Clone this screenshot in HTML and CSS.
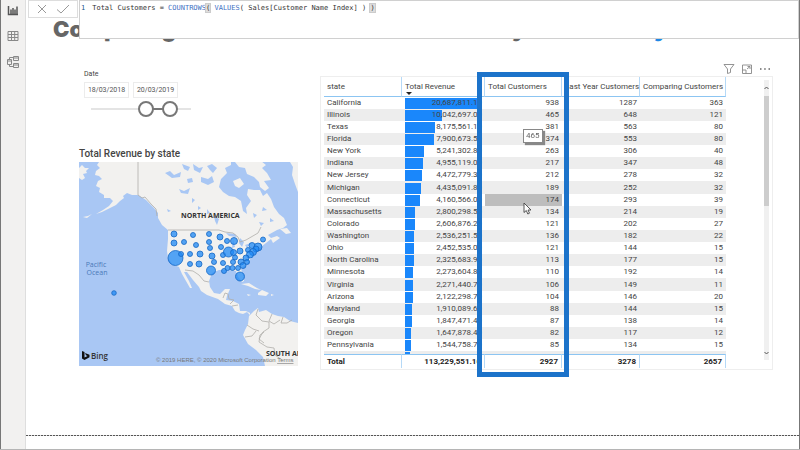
FILE: index.html
```html
<!DOCTYPE html>
<html lang="en">
<head>
<meta charset="utf-8">
<meta name="viewport" content="width=device-width, initial-scale=1">
<title>Comparing Customers</title>
<link rel="stylesheet" href="styles.css">
</head>
<body>
<nav class="rail" aria-label="Views">
  <button class="rail-btn" aria-label="Report view">
    <svg width="12" height="12" viewBox="0 0 12 12"><path d="M1.500 2v8.500H11M4 10V5.500M6 10V4M8 10V5.500M10 10V2.500" fill="none" stroke="#555" stroke-width="1.500"/></svg>
  </button>
  <button class="rail-btn" aria-label="Data view">
    <svg width="12" height="12" viewBox="0 0 12 12"><path d="M1 1.500h10v9H1zM1 4.500h10M1 7.500h10M4.500 1.500v9M7.700 1.500v9" fill="none" stroke="#888" stroke-width="1"/></svg>
  </button>
  <button class="rail-btn" aria-label="Model view">
    <svg width="14" height="14" viewBox="0 0 14 14"><path d="M1.500 4.500h4v5h-4zM1.500 6h4M7.500 1.500h5v4h-5zM7.500 3h5M7.500 8.500h5v4h-5zM7.500 10h5M3.500 4.500v-2h4M3.500 9.500v2h4" fill="none" stroke="#888" stroke-width="1"/></svg>
  </button>
</nav>

<main class="report">
  <h1 class="title"><span>Comparing</span> <span class="title-mid">by</span> <span class="title-end">y</span></h1>

  <div class="formula">
    <div class="formula-actions">
      <button aria-label="Cancel"><svg width="10" height="10" viewBox="0 0 10 10"><path d="M1 1l8 8M9 1L1 9" fill="none" stroke="#999" stroke-width="1"/></svg></button>
      <button aria-label="Commit"><svg width="14" height="10" viewBox="0 0 14 10"><path d="M1 5.500L5 9l8-8" fill="none" stroke="#999" stroke-width="1"/></svg></button>
    </div>
    <div class="formula-editor"><span class="line-no">1</span><code>Total Customers = <span class="fn">COUNTROWS</span><span class="paren">(</span> <span class="fn">VALUES</span>( Sales[Customer Name Index] ) <span class="paren">)</span></code></div>
  </div>

  <div class="canvas">
    <div class="side">
      <section class="slicer">
        <h2 class="slicer-title">Date</h2>
        <div class="dates">
          <input type="text" aria-label="Start date" value="18/03/2018">
          <input type="text" aria-label="End date" value="20/03/2019">
        </div>
        <div class="range">
          <input type="range" aria-label="Range start" min="0" max="100" value="56">
          <input type="range" aria-label="Range end" min="0" max="100" value="85">
        </div>
      </section>
      <section class="map-visual">
        <h2 class="map-title">Total Revenue by state</h2>
        <svg class="map" viewBox="79 162 219 204" role="img" aria-label="Map of total revenue by state">
          <rect x="79" y="162" width="219" height="204" fill="#a9c7f4"/>
          <g fill="#f2f1ef">
            <path d="M99 162L97 165 100 168 96 171 95 175 99 176 102 179 98 181 96 186 100 188 99 192 104 195 104 198 110 198 113 201 109 206 103 210 96 214 102 212 110 208 116 205 120 201 124 198 123 196 127 193 132 195 138 195 143 198 146 200 150 204 154 208 158 213 158 218 162 225 168 230 168 239 167 251 168 258 172 264 179 267 182 274 186 281 190 288 192 288 189 281 184 272 187 272 193 280 199 287 201 291 207 295 218 299 225 304 232 306 235 311 239 313 243 314 247 312 250 315 250 313 246 311 240 311 239 304 233 301 226 300 227 296 230 289 225 289 220 294 214 293 210 287 209 281 212 273 219 270 228 270 236 271 238 277 242 282 244 281 243 275 241 269 248 262 251 258 254 251 262 246 266 243 271 239 273 243 280 238 277 236 271 238 268 235 277 230 283 228 287 225 284 218 279 214 274 207 271 199 267 193 263 196 260 190 254 190 248 189 247 195 251 201 246 208 247 214 243 211 241 201 235 197 229 196 223 192 219 187 221 179 227 173 225 168 231 165 231 162Z"/>
            <path d="M79 168l3-3 3 3 4 0-3 3 1 2-4 1 2 4-3 2-3-2zM83 217l5-1 4-2-5 4zM235 162l4 5 6 1 2 6 7 3 5 5 1 5 5 4 4-3-5-7 7-1-4-7-5-5 4-3-5-4zM233 181l7-3 4 6-5 4-4-2zM290 162l3 5-1 8 3 9 3 8V162z"/>
            <path d="M280 229l7-1 4 5-5 1zM241 284l8-1 8 5 4 2-6-1-7-3zM258 293l4-3 7 3-3 3-8-1zM247 294l4 1-3 1zM271 294l3 1-3 1z"/>
            <path d="M249 316L254 311 258 308 259 312 266 310 272 314 278 316 284 317 290 321 298 323V366H265L263 357 256 350 248 344 243 335 245 330 248 324z"/>
          </g>
          <g fill="#a9c7f4">
            <path d="M165 173l5-2 4 4 7-3-1 5-8 1zM179 189l5 2 6-3-2 6-7-1zM182 164l8 3-2 4-4-2zM193 164l6 4 4-1-3 6-6-3zM201 177l7 2 4-3 2 6-6 3-7-3zM187 179l5-1 1 4-5 1zM207 166l5-2 5 4-4 5-3-3zM167 209l4 2-3 1zM192 198l3 2-3 3zM214 216l5 3-2 6-2-4zM207 209l3 4-3 1zM198 206l3 2-3 2zM226 233l9 1 2 3-8-1zM233 239l2 8-3 1zM240 238l4 4-2 5-3-4zM245 245l6-2-4 5zM253 213l4 2-3 3zM263 207l4 3-5 1zM259 222l5 1-3 3zM270 218l4 3-4 1z"/>
          </g>
          <g fill="none" stroke="#b0aeab" stroke-width="0.800">
            <path d="M138 162v33l4 3 3-1 6 7 5 5 1 7M168 230h51l6 2 8 1 5 4 2 5 6-2 12-7 3-6"/>
            <path d="M185 270l8 1 6 4 5 6 5 1M223 298l2-5 3 1 1 5 5 1-4 4M232 306l6-1M258 309l-2 6 6 6 7 1v6l-6 4-4 7 5 4M247 325l6 4 6 2M272 314l-3 7 5 3 6-4M283 317l-2 6h6l5-3M264 332l-4 3-1 7 8 5 7 1 1 7 7 5M245 337l7-1 4-5"/>
          </g>
          <g class="bubbles">
            <circle cx="174" cy="234" r="3"/><circle cx="174" cy="243" r="3"/><circle cx="184" cy="242" r="2.500"/><circle cx="193" cy="235" r="2.500"/><circle cx="209" cy="234" r="2.500"/><circle cx="220" cy="237" r="3"/><circle cx="227" cy="241" r="2.500"/><circle cx="234" cy="241" r="3.500"/><circle cx="196" cy="245" r="2.500"/><circle cx="209" cy="242" r="2.500"/><circle cx="210" cy="248" r="2.500"/><circle cx="221" cy="247" r="2.500"/>
            <circle cx="175.500" cy="258" r="7.500"/><circle cx="181" cy="254" r="2.500"/><circle cx="190" cy="254" r="2.500"/><circle cx="200" cy="254" r="3"/><circle cx="212" cy="256" r="3"/><circle cx="223" cy="255" r="2.500"/><circle cx="228.500" cy="252" r="5"/><circle cx="233.500" cy="252.500" r="3"/><circle cx="240" cy="251" r="3"/><circle cx="248" cy="250" r="2.500"/><circle cx="252" cy="245.500" r="3"/><circle cx="263" cy="239.500" r="2.500"/><circle cx="258" cy="247" r="4"/><circle cx="256" cy="249" r="3"/><circle cx="253" cy="252" r="3.500"/><circle cx="250" cy="254.500" r="3.500"/><circle cx="246" cy="258" r="3"/><circle cx="235" cy="257.500" r="2.500"/><circle cx="233" cy="262" r="2.500"/><circle cx="241" cy="262" r="3"/>
            <circle cx="190" cy="264" r="2.500"/><circle cx="199" cy="264" r="3"/><circle cx="214" cy="262" r="2.500"/><circle cx="223" cy="263" r="2.500"/><circle cx="211" cy="270.500" r="4.500"/><circle cx="224" cy="271" r="2.500"/><circle cx="227.500" cy="268" r="2.500"/><circle cx="232.500" cy="268" r="2.500"/><circle cx="238" cy="268" r="2.500"/><circle cx="243" cy="265.500" r="3"/><circle cx="247" cy="262" r="2.500"/><circle cx="240" cy="276.500" r="4.500"/><circle cx="114" cy="293" r="2.300"/>
          </g>
          <g class="map-region"><text x="181" y="218">NORTH AMERICA</text><text x="266" y="356">SOUTH AMERICA</text></g>
          <g class="map-ocean"><text x="96" y="267" text-anchor="middle">Pacific</text><text x="97" y="275" text-anchor="middle">Ocean</text></g>
          <path d="M82 351l2.500 1v5.500l3-1.500-1.500-.8-1-2.200 4.500 1.700v2.500L84.500 360 82 358.500z" fill="#111"/>
          <text class="map-brand" x="91" y="359">Bing</text>
          <text class="map-credit" x="156" y="362">© 2019 HERE, © 2020 Microsoft Corporation <tspan text-decoration="underline">Terms</tspan></text>
        </svg>
      </section>
    </div>

    <section class="matrix">
      <div class="visual-tools">
        <button aria-label="Filters"><svg width="12" height="10" viewBox="0 0 12 10"><path d="M1 .5h10L7.500 5v3.500l-3 1V5z" fill="none" stroke="#888" stroke-width=".9"/></svg></button>
        <button aria-label="Focus mode"><svg width="10" height="10" viewBox="0 0 10 10"><path d="M.5 1h9v8.500h-9zM.5 6H4v3.500M5 5l3-2.500M5.500 2.500H8V5" fill="none" stroke="#888" stroke-width=".9"/></svg></button>
        <button aria-label="More options"><svg width="12" height="10" viewBox="0 0 12 10"><path d="M1 5h1.500M5.200 5h1.500M9.500 5H11" stroke="#666" stroke-width="1.400"/></svg></button>
      </div>
      <div class="frame">
        <div class="scroller">
          <table>
            <colgroup><col class="c-state"><col class="c-rev"><col class="c-total"><col class="c-last"><col class="c-comp"></colgroup>
            <thead><tr><th>state</th><th class="sorted">Total Revenue</th><th>Total Customers</th><th class="num">Last Year Customers</th><th class="num">Comparing Customers</th></tr></thead>
            <tbody>
              <tr><td>California</td><td><div class="bar"><i style="width:100%"></i><span>20,687,811.10</span></div></td><td>938</td><td>1287</td><td>363</td></tr>
              <tr><td>Illinois</td><td><div class="bar"><i style="width:48.5%"></i><span>10,042,697.00</span></div></td><td>465</td><td>648</td><td>121</td></tr>
              <tr><td>Texas</td><td><div class="bar"><i style="width:39.5%"></i><span>8,175,561.10</span></div></td><td>381</td><td>563</td><td>80</td></tr>
              <tr><td>Florida</td><td><div class="bar"><i style="width:38.2%"></i><span>7,900,673.50</span></div></td><td>374</td><td>553</td><td>80</td></tr>
              <tr><td>New York</td><td><div class="bar"><i style="width:25.3%"></i><span>5,241,302.80</span></div></td><td>263</td><td>306</td><td>40</td></tr>
              <tr><td>Indiana</td><td><div class="bar"><i style="width:24%"></i><span>4,955,119.00</span></div></td><td>217</td><td>347</td><td>48</td></tr>
              <tr><td>New Jersey</td><td><div class="bar"><i style="width:21.6%"></i><span>4,472,779.30</span></div></td><td>212</td><td>278</td><td>32</td></tr>
              <tr><td>Michigan</td><td><div class="bar"><i style="width:21.4%"></i><span>4,435,091.80</span></div></td><td>189</td><td>252</td><td>32</td></tr>
              <tr><td>Connecticut</td><td><div class="bar"><i style="width:20.1%"></i><span>4,160,566.00</span></div></td><td class="hovered">174</td><td>293</td><td>39</td></tr>
              <tr><td>Massachusetts</td><td><div class="bar"><i style="width:13.5%"></i><span>2,800,298.50</span></div></td><td>134</td><td>214</td><td>19</td></tr>
              <tr><td>Colorado</td><td><div class="bar"><i style="width:12.6%"></i><span>2,606,876.20</span></div></td><td>121</td><td>202</td><td>27</td></tr>
              <tr><td>Washington</td><td><div class="bar"><i style="width:12.3%"></i><span>2,536,251.50</span></div></td><td>136</td><td>182</td><td>22</td></tr>
              <tr><td>Ohio</td><td><div class="bar"><i style="width:11.9%"></i><span>2,452,535.00</span></div></td><td>121</td><td>144</td><td>15</td></tr>
              <tr><td>North Carolina</td><td><div class="bar"><i style="width:11.2%"></i><span>2,325,683.90</span></div></td><td>113</td><td>177</td><td>15</td></tr>
              <tr><td>Minnesota</td><td><div class="bar"><i style="width:11%"></i><span>2,273,604.80</span></div></td><td>110</td><td>192</td><td>14</td></tr>
              <tr><td>Virginia</td><td><div class="bar"><i style="width:11%"></i><span>2,271,440.70</span></div></td><td>106</td><td>149</td><td>11</td></tr>
              <tr><td>Arizona</td><td><div class="bar"><i style="width:10.3%"></i><span>2,122,298.70</span></div></td><td>104</td><td>146</td><td>20</td></tr>
              <tr><td>Maryland</td><td><div class="bar"><i style="width:9.2%"></i><span>1,910,089.60</span></div></td><td>88</td><td>144</td><td>15</td></tr>
              <tr><td>Georgia</td><td><div class="bar"><i style="width:8.9%"></i><span>1,847,471.40</span></div></td><td>87</td><td>138</td><td>14</td></tr>
              <tr><td>Oregon</td><td><div class="bar"><i style="width:8%"></i><span>1,647,878.40</span></div></td><td>82</td><td>117</td><td>12</td></tr>
              <tr><td>Pennsylvania</td><td><div class="bar"><i style="width:7.5%"></i><span>1,544,758.70</span></div></td><td>85</td><td>134</td><td>15</td></tr>
              <tr><td></td><td><div class="bar"><i style="width:7%"></i></div></td><td></td><td></td><td></td></tr>
            </tbody>
            <tfoot><tr><td>Total</td><td>113,229,551.10</td><td>2927</td><td>3278</td><td>2657</td></tr></tfoot>
          </table>
        </div>
        <div class="scrollbar" aria-hidden="true">
          <svg width="5" height="16" viewBox="0 0 5 16"><path d="M.5 9l2-2 2 2" fill="none" stroke="#555"/></svg>
          <div class="thumb"></div>
          <svg width="5" height="14" viewBox="0 0 5 14"><path d="M.5 6l2 2 2-2" fill="none" stroke="#555"/></svg>
        </div>
        <div class="marker"></div>
        <div class="tip" role="tooltip">465</div>
        <svg class="pointer" width="9" height="13" viewBox="0 0 9 13"><path d="M1 1v9.500l2.300-2 1.500 3.500 1.700-.8L5 8h3z" fill="#fff" stroke="#444" stroke-width=".9"/></svg>
      </div>
    </section>
  </div>
  <div class="page-edge"></div>
</main>
</body>
</html>
```
FILE: styles.css
```css
* { box-sizing: border-box; }

body {
  margin: 0;
  min-height: 100vh;
  display: flex;
  background: #fff;
  color: #444;
  font: 8px/12px Roboto, "Open Sans", sans-serif;
  border-bottom: 1px solid #b5b5b5;
}

button {
  display: flex;
  padding: 0;
  border: 0;
  background: none;
}

h1, h2 { margin: 0; }

/* Left view rail */
.rail {
  width: 26px;
  flex: none;
  display: flex;
  flex-direction: column;
  align-items: center;
  gap: 12px;
  padding-top: 3px;
  background: #f2f1f0;
  border-left: 1px solid #777;
  border-right: 1px solid #dedede;
}

.rail-btn {
  width: 14px;
  height: 14px;
  align-items: center;
  justify-content: center;
}

/* Report surface */
.report {
  position: relative;
  flex: 1;
  min-width: 0;
  display: flex;
  flex-direction: column;
  border-right: 1px solid #777;
  overflow: hidden;
}

.title {
  display: flex;
  padding: 16px 0 0 27px;
  color: #666;
  font: 900 22px/26px Inter, "Liberation Sans", sans-serif;
}

.title-mid { margin-left: 322px; }
.title-end { margin-left: 128px; color: #1e88e5; }

/* Formula bar floats over the report title */
.formula {
  position: absolute;
  inset: 0 0 auto 2px;
  display: flex;
  align-items: flex-start;
}

.formula-actions {
  width: 50px;
  height: 18px;
  display: flex;
  align-items: center;
  justify-content: center;
  gap: 9px;
  background: #fff;
  border: 1px solid #ddd;
}

.formula-editor {
  flex: 1;
  height: 39px;
  margin-left: 1px;
  padding: 1px;
  display: flex;
  gap: 7px;
  background: #fff;
  border: 1px solid #d0d0d0;
  color: #333;
  white-space: nowrap;
}

.formula-editor, .formula-editor code { font: 7px/12px "DejaVu Sans Mono", monospace; }
.line-no { color: #235a8c; }
.fn { color: #4472c4; }
.paren { background: #ddd; outline: 1px solid #ccc; }

.canvas {
  display: flex;
  gap: 22px;
  padding: 20px 26px 0 53px;
}

.side { width: 219px; flex: none; }

/* Date slicer */
.slicer { padding: 6px 0 0 5px; }

.slicer-title, .map-title { color: #444; }
.slicer-title { font-size: 7px; line-height: 12px; font-weight: 400; }

.dates {
  display: flex;
  gap: 4px;
  padding-top: 2px;
}

.dates input {
  width: 45px;
  height: 16px;
  padding: 0;
  border: 1px solid #ececec;
  background: #fff;
  color: #555;
  font: 7px/12px Roboto, sans-serif;
  text-align: center;
}

.range {
  position: relative;
  width: 100px;
  height: 16px;
  margin: 3px 0 0 7px;
  background:
    linear-gradient(#777, #777) 55px 7px / 24px 2px no-repeat,
    linear-gradient(#e4e4e4, #e4e4e4) 0 7px / 100% 2px no-repeat;
}

.range input {
  position: absolute;
  inset: 0;
  width: 100%;
  height: 16px;
  margin: 0;
  appearance: none;
  background: none;
  pointer-events: none;
}

.range input::-webkit-slider-thumb {
  appearance: none;
  width: 16px;
  height: 16px;
  border: 2px solid #777;
  border-radius: 50%;
  background: #fff;
  pointer-events: auto;
}

/* Map */
.map-visual { padding-top: 29px; }
.map-title { font-size: 10px; line-height: 16px; font-weight: 500; }
.map { display: block; width: 100%; }

.bubbles circle {
  fill: #1e88f5;
  fill-opacity: 0.75;
  stroke: #1668c4;
  stroke-width: 0.8;
}

.map text { font-family: "Open Sans", sans-serif; }
.map .map-region { font-size: 7px; font-weight: 700; fill: #333; }
.map .map-ocean { font-size: 7px; fill: #4a79b8; }
.map .map-brand { font-size: 8px; font-weight: 600; fill: #333; }
.map .map-credit { font-size: 6px; font-family: "Liberation Sans", sans-serif; fill: #777; }

/* Table visual */
.matrix { flex: 1; min-width: 0; }

.visual-tools {
  display: flex;
  justify-content: flex-end;
  gap: 7px;
  height: 14px;
  padding: 2px 2px 0 0;
}

.frame {
  position: relative;
  display: flex;
  justify-content: space-between;
  border: 1px solid #eee;
  padding: 0 3px 1px 3px;
}

.scroller {
  height: 291px;
  overflow: hidden;
}

table {
  width: 402px;
  table-layout: fixed;
  border-collapse: separate;
  border-spacing: 0;
}

.c-state { width: 78px; }
.c-rev { width: 83px; }
.c-total { width: 77px; }
.c-last { width: 78px; }
.c-comp { width: 86px; }

th, td {
  height: 12px;
  padding: 0 3px;
  line-height: 12px;
  text-align: right;
  white-space: nowrap;
}

td:first-child, th { text-align: left; }
th.num { text-align: right; }

thead th {
  position: sticky;
  top: 0;
  z-index: 2;
  height: 20px;
  font-weight: 400;
  background: #fff;
  border-right: 1px solid #b5d9f7;
  border-bottom: 1px solid #8cc5f2;
}

.sorted::after {
  content: "";
  position: absolute;
  left: 4px;
  bottom: 1px;
  border: 3px solid transparent;
  border-top-color: #222;
  border-bottom: 0;
}

tbody tr:nth-child(even) td { background: #ededed; }
tbody tr:nth-child(8n) td { height: 13px; }
tbody td.hovered { background: #bdbdbd; }

.bar { position: relative; height: 12px; }
.bar i {
  position: absolute;
  inset: 1px auto 0 0;
  background: #1a87fb;
}
.bar span { position: relative; }

tfoot td {
  position: sticky;
  bottom: 0;
  z-index: 2;
  height: 14px;
  background: #fff;
  color: #222;
  font-weight: 700;
  border-top: 1px solid #8cc5f2;
  border-right: 1px solid #b5d9f7;
}

.scrollbar {
  display: flex;
  flex-direction: column;
  width: 5px;
  height: 280px;
  margin-top: 3px;
  background: #f0f0f0;
}

.thumb {
  height: 110px;
  margin-bottom: auto;
  background: #cdcdcd;
}

/* Callouts over the table */
.marker {
  position: absolute;
  left: 156px;
  top: -5px;
  width: 92px;
  height: 305px;
  border: 5px solid #1c73ca;
  z-index: 3;
}

.tip {
  position: absolute;
  left: 202px;
  top: 52px;
  padding: 0 2px;
  background: #fff;
  border: 1px solid #888;
  box-shadow: 2px 2px 1px #888;
  color: #666;
  z-index: 4;
}

.pointer {
  position: absolute;
  left: 202px;
  top: 125px;
  z-index: 4;
}

/* Dotted lower boundary of the report page */
.page-edge {
  margin-top: auto;
  margin-bottom: 13px;
  height: 1px;
  background: repeating-linear-gradient(90deg, #555 0 2px, #ddd 2px 3px);
}
```
